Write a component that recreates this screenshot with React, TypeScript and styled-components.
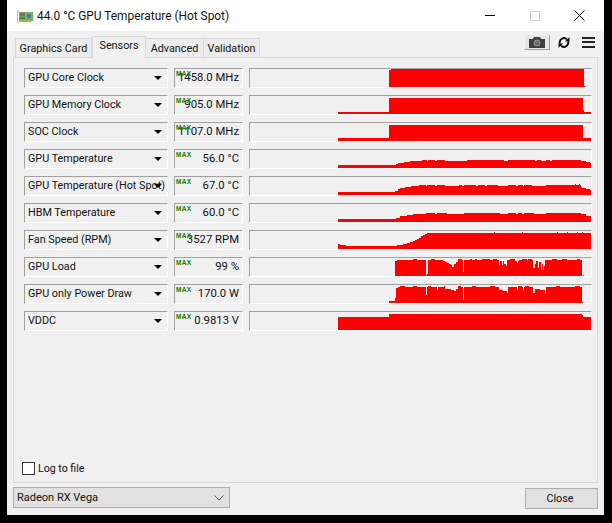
import React from "react";
import styled, { createGlobalStyle } from "styled-components";

const Global = createGlobalStyle`
  html, body { margin: 0; padding: 0; background: #000; }
  body { width: 612px; height: 523px; overflow: hidden; font-family: Roboto, "Liberation Sans", sans-serif; font-size: 11px; color: #111; }
`;

const Screen = styled.div`
  width: 612px; height: 523px; background: #000; padding-left: 7px; box-sizing: border-box;
`;
const Win = styled.div`
  width: 597px; height: 515px; background: #f0f0f0; display: flex; flex-direction: column;
`;
const TitleBar = styled.div`
  height: 31px; background: #fff; display: flex; align-items: center; padding: 0 0 0 10px; flex: none;
`;
const TitleText = styled.span`
  margin-left: 4px; font-size: 11.9px; flex: 1; color: #111;
`;
const WinControls = styled.div`
  display: flex; align-items: center; margin-right: 2px;
`;
const WinBtn = styled.div`
  width: 45px; height: 31px; display: flex; align-items: center; justify-content: center;
`;
const Body = styled.div`
  flex: 1; display: flex; flex-direction: column; padding: 5px 6px 5px 6px; min-height: 0;
`;
const TabBar = styled.div`
  height: 21px; display: flex; align-items: flex-end; padding-left: 2px; position: relative; flex: none;
`;
const Tab = styled.div<{ $active?: boolean; $w: number }>`
  width: ${p => p.$w}px; box-sizing: border-box; text-align: center; font-size: 10.8px; white-space: nowrap;
  height: ${p => (p.$active ? 22 : 19)}px; line-height: ${p => (p.$active ? 18 : 19)}px;
  background: ${p => (p.$active ? "#f0f0f0" : "#ececec")};
  border: 1px solid #d9d9d9; border-bottom: none;
  border-left-width: ${p => (p.$active ? 1 : 0)}px;
  margin-bottom: ${p => (p.$active ? -1 : 0)}px;
  position: relative; z-index: ${p => (p.$active ? 2 : 1)};
  &:first-child { border-left-width: 1px; }
`;
const Tools = styled.div`
  position: absolute; right: 0; top: -2px; height: 16px; display: flex; align-items: center;
`;
const CamButton = styled.div`
  width: 26px; height: 16px; box-sizing: border-box; background: #e6e6e6;
  border: 1px solid; border-color: #f4f4f4 #a0a0a0 #a0a0a0 #f4f4f4;
  display: flex; align-items: center; justify-content: center;
  margin-right: 7px;
`;
const IconSlot = styled.div`
  width: 13px; height: 11px; display: flex; align-items: center; justify-content: center; margin-right: 12px;
  &:last-child { margin-right: 3px; }
`;
const Panel = styled.div`
  height: 426px; box-sizing: border-box; border: 1px solid #d9d9d9; flex: none;
  padding: 10px 5px 0 10px; display: flex; flex-direction: column; position: relative;
`;
const Rows = styled.div`
  display: flex; flex-direction: column; gap: 7px;
`;
const Row = styled.div`
  display: flex; gap: 6px; height: 20px;
`;
const Sunken = styled.div`
  box-sizing: border-box; height: 20px; border: 1px solid; border-color: #a0a0a0 #fff #fff #a0a0a0;
`;
const NameBox = styled(Sunken)`
  width: 144px; position: relative; padding-left: 3px; line-height: 18px; font-size: 10.8px; white-space: nowrap; overflow: hidden;
`;
const Arrow = styled.div`
  position: absolute; right: 5px; top: 7px; width: 0; height: 0;
  border-left: 4px solid transparent; border-right: 4px solid transparent; border-top: 4px solid #000;
`;
const ValueBox = styled(Sunken)`
  width: 69px; position: relative; text-align: right; padding-right: 3px; line-height: 18px; font-size: 11.3px; white-space: nowrap;
`;
const Max = styled.span`
  position: absolute; left: 1px; top: 1px; font: bold 6.5px/7px "Liberation Sans", sans-serif; letter-spacing: 0.3px; color: #078007;
`;
const GraphBox = styled(Sunken)`
  width: 343px; display: flex;
`;
const Footer = styled.div`
  position: absolute; left: 8px; bottom: 7px; display: flex; align-items: center; gap: 3px; font-size: 10.6px;
`;
const Check = styled.div`
  width: 13px; height: 13px; box-sizing: border-box; background: #fff; border: 1px solid #333;
`;
const Bottom = styled.div`
  display: flex; justify-content: space-between; align-items: flex-start; margin-top: 4px;
`;
const Combo = styled.div`
  width: 217px; height: 21px; box-sizing: border-box; background: #e1e1e1; border: 1px solid #adadad;
  display: flex; align-items: center; justify-content: space-between; padding: 0 5px 0 3px; font-size: 11px;
`;
const CloseBtn = styled.div`
  width: 73px; height: 21px; margin-top: 1px; box-sizing: border-box; background: #e1e1e1; border: 1px solid #adadad;
  display: flex; align-items: center; justify-content: center; font-size: 10.8px; padding-right: 3px;
`;

type Step = [number, number];
// Column heights from [startX, height] steps, overlaid with [fromX, toX, height] dips.
type Span = [number, number, number];
const ORIGIN = 250;
function columns(steps: Step[], end: number, spans: Span[] = []): number[] {
  const h: number[] = new Array(341).fill(0);
  for (let i = 0; i < steps.length; i++) {
    const [x, v] = steps[i];
    const nx = i + 1 < steps.length ? steps[i + 1][0] : end;
    for (let c = x; c < nx; c++) h[c - ORIGIN] = v;
  }
  for (const [a, b, v] of spans) for (let c = a; c < b; c++) h[c - ORIGIN] = v;
  return h;
}

function pathFor(h: number[]): string {
  let d = "";
  h.forEach((v, i) => {
    if (v > 0) d += `M${i} ${18 - v}h1v${v}h-1z`;
  });
  return d;
}

const loadSpans: Span[] = [
  [413, 417, 17], [431, 435, 17], [460, 462, 17], [470, 472, 17], [475, 477, 17], [482, 490, 17], [493, 497, 17], [510, 517, 17], [522, 527, 17], [528, 532, 17], [552, 557, 17], [562, 567, 17], [577, 580, 17],
  [426, 427, 1], [427, 428, 2],
  [443, 445, 15], [445, 447, 14], [447, 449, 13], [449, 451, 12], [451, 452, 11], [452, 454, 9], [454, 456, 12], [456, 458, 14], [458, 461, 17],
  [463, 464, 4],
  [499, 500, 11], [500, 502, 15], [502, 503, 11], [503, 504, 15], [504, 506, 12], [506, 507, 10],
  [515, 517, 15], [517, 518, 13], [518, 519, 15],
  [533, 535, 8], [535, 536, 12], [536, 538, 15], [538, 539, 8], [539, 541, 14], [541, 542, 6], [542, 543, 12], [543, 544, 6], [544, 545, 10],
];
const powerSpans: Span[] = [
  [400, 405, 17], [413, 417, 17], [428, 431, 17], [444, 446, 17], [458, 461, 17], [472, 476, 17], [490, 495, 17], [518, 522, 17], [525, 529, 17], [556, 560, 17], [575, 580, 17],
  [426, 427, 8], [437, 438, 13],
  [445, 451, 14], [451, 454, 13], [454, 456, 12], [456, 458, 14],
  [463, 464, 3],
  [499, 503, 13], [503, 507, 12], [507, 508, 10],
  [517, 518, 13], [523, 524, 12],
  [533, 535, 10], [535, 540, 14], [540, 545, 13], [545, 546, 9],
];

const graphs: Record<string, number[]> = {
  core: columns([[389, 17], [391, 18], [584, 1]], 585),
  mem: columns([[338, 2], [389, 16], [583, 4], [584, 2]], 591),
  soc: columns([[338, 3], [389, 16], [583, 3]], 591),
  temp: columns([[338, 3], [396, 4], [398, 5], [404, 6], [410, 7], [422, 8], [427, 7], [428, 8], [435, 7], [437, 8], [445, 7], [467, 8], [504, 7], [508, 8], [535, 7], [537, 8], [541, 7], [546, 8], [550, 7], [552, 8], [581, 7], [586, 6], [590, 5]], 591),
  hot: columns([[338, 3], [395, 4], [398, 6], [400, 7], [405, 8], [411, 9], [419, 10], [426, 9], [427, 10], [435, 9], [437, 10], [445, 9], [459, 10], [462, 9], [464, 10], [476, 9], [478, 10], [485, 9], [487, 10], [498, 9], [508, 10], [516, 9], [518, 10], [523, 9], [524, 10], [532, 9], [546, 10], [575, 11], [576, 10], [579, 11], [580, 10], [581, 8], [582, 7], [586, 6], [590, 5]], 591),
  hbm: columns([[338, 3], [396, 4], [400, 6], [407, 7], [413, 8], [426, 9], [435, 8], [437, 9], [447, 8], [464, 9], [500, 8], [508, 9], [516, 8], [518, 9], [522, 8], [524, 9], [534, 8], [546, 9], [581, 8], [586, 6]], 591),
  fan: columns([[338, 5], [340, 4], [346, 3], [397, 4], [403, 5], [407, 6], [410, 7], [413, 8], [415, 9], [417, 10], [419, 11], [421, 13], [423, 14], [425, 15], [427, 16], [433, 16]], 591, [[494, 495, 17], [522, 523, 17], [557, 558, 17], [567, 568, 17], [577, 578, 17], [582, 583, 17]]),
  load: columns([[395, 15], [397, 16], [582, 0], [583, 1]], 584, loadSpans),
  power: columns([[389, 2], [395, 5], [396, 15], [398, 16], [582, 1]], 583, powerSpans),
  vddc: columns([[338, 13], [389, 16], [582, 15], [583, 13]], 591),
};

const Graph: React.FC<{ k: string }> = ({ k }) => (
  <svg width="341" height="18" viewBox="0 0 341 18" shapeRendering="crispEdges">
    <path d={pathFor(graphs[k])} fill="#ff0000" />
  </svg>
);

const sensors = [
  { name: "GPU Core Clock", value: "1458.0 MHz", k: "core" },
  { name: "GPU Memory Clock", value: "905.0 MHz", k: "mem" },
  { name: "SOC Clock", value: "1107.0 MHz", k: "soc" },
  { name: "GPU Temperature", value: "56.0 °C", k: "temp" },
  { name: "GPU Temperature (Hot Spot)", value: "67.0 °C", k: "hot" },
  { name: "HBM Temperature", value: "60.0 °C", k: "hbm" },
  { name: "Fan Speed (RPM)", value: "3527 RPM", k: "fan" },
  { name: "GPU Load", value: "99 %", k: "load" },
  { name: "GPU only Power Draw", value: "170.0 W", k: "power" },
  { name: "VDDC", value: "0.9813 V", k: "vddc" },
];

const CardIcon = () => (
  <svg width="16" height="16" viewBox="0 0 16 16" shapeRendering="crispEdges">
    <rect x="0" y="2" width="1" height="13" fill="#b8b8b8" />
    <rect x="1" y="3" width="1" height="1" fill="#d0d0d0" />
    <rect x="2" y="4" width="14" height="9" fill="#62b45a" />
    <rect x="2" y="12" width="12" height="2" fill="#8cc63f" />
    <rect x="3" y="5" width="5" height="3" fill="#c8504a" />
    <rect x="9" y="5" width="6" height="6" fill="#8f9ea0" />
    <rect x="10" y="6" width="4" height="4" fill="#5f7678" />
    <rect x="3" y="9" width="5" height="2" fill="#3d8f4d" />
  </svg>
);

const CameraIcon = () => (
  <svg width="16" height="11" viewBox="0 0 16 11">
    <path d="M0 2h4l1-2h6l1 2h4v9H0z" fill="#3f3f3f" />
    <circle cx="8" cy="6" r="3" fill="#6b6b6b" stroke="#9a9a9a" strokeWidth="1" />
  </svg>
);

const RefreshIcon = () => (
  <svg width="12" height="11" viewBox="0 0 13 12" fill="none" stroke="#000" strokeWidth="2">
    <path d="M2 7A4.6 4.6 0 0 1 9.6 2.5" />
    <path d="M11 5A4.6 4.6 0 0 1 3.4 9.5" />
    <path d="M7.5 4.8h5V0.3z" fill="#000" stroke="none" />
    <path d="M5.5 7.2h-5v4.5z" fill="#000" stroke="none" />
  </svg>
);

const MenuIcon = () => (
  <svg width="13" height="11" viewBox="0 0 13 11" shapeRendering="crispEdges">
    <rect y="0" width="13" height="2" fill="#222" />
    <rect y="4" width="13" height="2" fill="#222" />
    <rect y="9" width="13" height="2" fill="#222" />
  </svg>
);

export default function App() {
  return (
    <Screen>
      <Global />
      <Win>
        <TitleBar>
          <CardIcon />
          <TitleText>44.0 °C GPU Temperature (Hot Spot)</TitleText>
          <WinControls>
            <WinBtn>
              <svg width="10" height="1" shapeRendering="crispEdges"><rect width="10" height="1" fill="#000" /></svg>
            </WinBtn>
            <WinBtn>
              <svg width="10" height="10" shapeRendering="crispEdges"><rect x="0.5" y="0.5" width="9" height="9" fill="none" stroke="#d0d0d0" /></svg>
            </WinBtn>
            <WinBtn>
              <svg width="11" height="11" viewBox="0 0 11 11"><path d="M0.5 0.5l10 10M10.5 0.5l-10 10" stroke="#000" strokeWidth="1" /></svg>
            </WinBtn>
          </WinControls>
        </TitleBar>
        <Body>
          <TabBar>
            <Tab $w={77}>Graphics Card</Tab>
            <Tab $w={54} $active>Sensors</Tab>
            <Tab $w={58}>Advanced</Tab>
            <Tab $w={56}>Validation</Tab>
            <Tools>
              <CamButton><CameraIcon /></CamButton>
              <IconSlot><RefreshIcon /></IconSlot>
              <IconSlot><MenuIcon /></IconSlot>
            </Tools>
          </TabBar>
          <Panel>
            <Rows>
              {sensors.map(s => (
                <Row key={s.k}>
                  <NameBox>{s.name}<Arrow /></NameBox>
                  <ValueBox><Max>MAX</Max>{s.value}</ValueBox>
                  <GraphBox><Graph k={s.k} /></GraphBox>
                </Row>
              ))}
            </Rows>
            <Footer><Check />Log to file</Footer>
          </Panel>
          <Bottom>
            <Combo>
              Radeon RX Vega
              <svg width="10" height="6" viewBox="0 0 10 6" fill="none"><path d="M0.5 0.5L5 5l4.5-4.5" stroke="#555" /></svg>
            </Combo>
            <CloseBtn>Close</CloseBtn>
          </Bottom>
        </Body>
      </Win>
    </Screen>
  );
}
